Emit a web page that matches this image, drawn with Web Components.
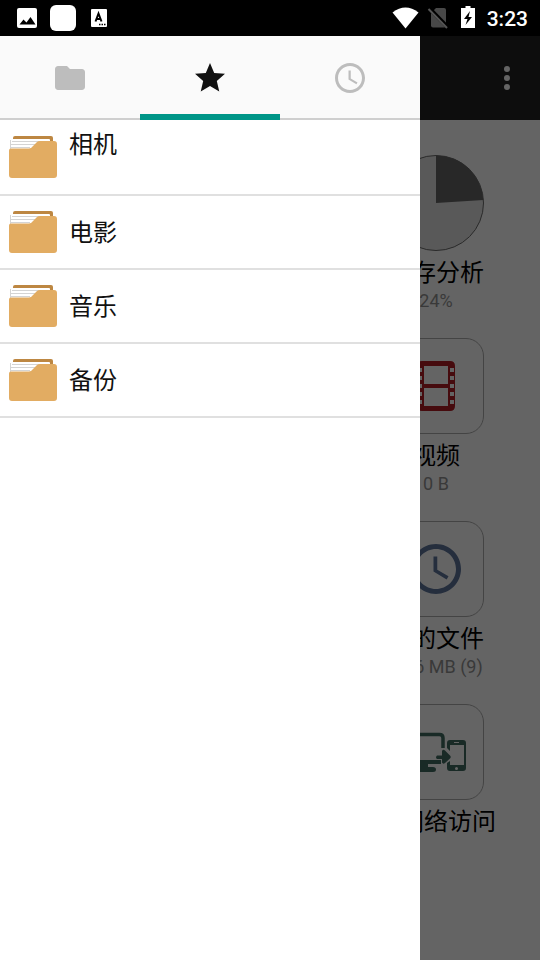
<!DOCTYPE html>
<html lang="zh-CN">
<head>
<meta charset="utf-8">
<meta name="viewport" content="width=device-width, initial-scale=1">
<title>文件管理器</title>
<style>
html, body { margin: 0; height: 100%; }
body { font-family: Roboto, "Noto Sans CJK SC", sans-serif; background: #fafafa; }
</style>
</head>
<body>
<file-app></file-app>
<script>
const define = (name, html, setup) => {
  const template = document.createElement('template');
  template.innerHTML = html;
  customElements.define(name, class extends HTMLElement {
    constructor() {
      super();
      this.attachShadow({ mode: 'open' }).append(template.content.cloneNode(true));
    }
    connectedCallback() { if (setup) setup(this, this.shadowRoot); }
  });
};

define('status-bar', `
<style>
:host { display: flex; align-items: center; justify-content: space-between; height: 36px; padding: 0 12px 0 16px; background: #000; color: #fff; }
div { display: flex; align-items: center; }
.left { gap: 12px; }
.right { gap: 8px; }
svg { display: block; }
time { font-size: 21px; line-height: 36px; font-weight: 500; padding-top: 1px; }
</style>
<div class="left">
  <svg width="22" height="22" viewBox="0 0 22 22"><rect x="1" y="1" width="20" height="20" rx="2" fill="#fff"/><path d="M3.500 17.500 7.500 12.500l3 3 4-5.500 5 7.500z" fill="#000"/></svg>
  <svg width="26" height="26" viewBox="0 0 26 26"><rect width="26" height="26" rx="6" fill="#fff"/></svg>
  <svg width="22" height="22" viewBox="0 0 22 22"><rect x="3" y="2" width="16" height="18" rx="1" fill="#fff"/><path d="M7.500 14.500 10.500 6.500l3 8M8.500 12h4" fill="none" stroke="#000" stroke-width="2"/><path d="M11 17.500h1.500m1 0H15m1 0h1.500" stroke="#000" stroke-width="1.500"/></svg>
</div>
<div class="right">
  <svg width="27" height="22" viewBox="0 0 27 22"><path d="M.5 5.500Q13.500-4.500 26.500 5.500L13.500 21.500z" fill="#fff"/></svg>
  <svg width="22" height="22" viewBox="0 0 22 22"><path d="M9 1h8q2 0 2 2v16q0 1.500-2 1.500H6q-2 0-2-2V6z" fill="#484848"/><path d="M2.500 1.500 21 20.500" stroke="#000" stroke-width="4"/><path d="M1.500 2 20 21" stroke="#555" stroke-width="2"/></svg>
  <svg width="22" height="24" viewBox="0 0 22 24"><path d="M8.500 0h5v2H18v20H4V2h4.500z" fill="#fff"/><path d="M13 5 7 13h3.500l-2 6L15 11h-3.500z" fill="#000"/></svg>
  <time>3:23</time>
</div>`);

define('app-bar', `
<style>
:host { display: flex; align-items: center; justify-content: flex-end; height: 84px; padding-right: 9px; background: #222; }
button { display: grid; place-items: center; width: 48px; height: 48px; padding: 0; border: 0; background: none; color: #fafafa; }
</style>
<button aria-label="更多选项"><svg width="36" height="36" viewBox="0 0 24 24" fill="currentColor"><circle cx="12" cy="6" r="2"/><circle cx="12" cy="12" r="2"/><circle cx="12" cy="18" r="2"/></svg></button>`);

define('storage-tile', `
<style>
:host { display: flex; flex-direction: column; align-items: center; width: 166px; text-align: center; }
.box { box-sizing: border-box; width: 96px; height: 96px; border: 1px solid #aaa; border-radius: 18px; display: grid; place-items: center; margin-bottom: 6px; }
:host([plain]) .box { border: 0; }
.title { font-size: 24px; line-height: 32px; color: #000; white-space: nowrap; }
.detail { font-size: 18px; line-height: 24px; color: #909090; white-space: nowrap; min-height: 24px; }
</style>
<div class="box"><slot name="icon"></slot></div>
<div class="title"><slot></slot></div>
<div class="detail"><slot name="detail"></slot></div>`);

define('storage-grid', `
<style>
:host { display: flex; flex-direction: column; align-items: flex-end; gap: 25px; padding: 35px 21px; }
svg { display: block; }
</style>
<storage-tile plain>
  <svg slot="icon" width="96" height="96" viewBox="0 0 96 96"><circle cx="48" cy="48" r="47.500" fill="#dfdfdf" stroke="#686868"/><path d="M48 48V.5A47.500 47.500 0 0 1 95.400 45z" fill="#646464"/></svg>
  内存分析<span slot="detail">24%</span>
</storage-tile>
<storage-tile>
  <svg slot="icon" width="38" height="50" viewBox="0 0 38 50"><path fill="#b01c24" fill-rule="evenodd" d="M5 0h28q5 0 5 5v40q0 5-5 5H5q-5 0-5-5V5q0-5 5-5zM7 5v18h24V5zm0 22v18h24V27zM1 7v4h4V7zm0 8v4h4v-4zm0 8v4h4v-4zm0 8v4h4v-4zm0 8v4h4v-4zM33 7v4h4V7zm0 8v4h4v-4zm0 8v4h4v-4zm0 8v4h4v-4zm0 8v4h4v-4z"/></svg>
  视频<span slot="detail">0 B</span>
</storage-tile>
<storage-tile>
  <svg slot="icon" width="60" height="60" viewBox="0 0 24 24" fill="#5c7399"><path d="M11.990 2C6.470 2 2 6.480 2 12s4.470 10 9.990 10C17.520 22 22 17.520 22 12S17.520 2 11.990 2zM12 20c-4.420 0-8-3.580-8-8s3.580-8 8-8 8 3.580 8 8-3.580 8-8 8zM12.500 7H11v6l5.250 3.150.75-1.230-4.500-2.670z"/></svg>
  新的文件<span slot="detail">1.36 MB (9)</span>
</storage-tile>
<storage-tile>
  <svg slot="icon" width="94" height="94" viewBox="1 1 94 94" fill="#406960"><path d="M55 44V34q0-3.500-3.500-3.500H17q-3 0-3 3v23q0 3 3 3" fill="none" stroke="#406960" stroke-width="3.500"/><path d="M16 56h37v4H16zM30 60h10v3h5q3 0 3 2.500t-3 2.500H25q-3 0-3-2.500t3-2.500h5z"/><path d="M49 51.500h5V47q1-2 3-.5l5 5q1.500 1.500 0 3l-5 4.500q-2 1.500-3-.5V55h-5q-2-1.500 0-3.500z"/><path fill-rule="evenodd" d="M62 36h13q3 0 3 3v25q0 3-3 3H62q-3 0-3-3v-5l3-2v4h14V41H62v6l-3-3v-5q0-3 3-3zm4 2v1h5v-1zM68.500 63a1.500 1.500 0 1 0 0 3 1.500 1.500 0 0 0 0-3z"/></svg>
  从网络访问
</storage-tile>`);

define('tab-strip', `
<style>
:host { display: grid; grid-template-columns: repeat(3, 1fr); height: 84px; background: linear-gradient(#cfcfcf, #cfcfcf) bottom / 100% 2px no-repeat #fafafa; }
button { display: grid; place-items: center; padding: 0; border: 0; background: none; color: #bdbdbd; }
button[aria-selected=true] { color: #111; box-shadow: inset 0 -6px #009688; }
svg { display: block; width: 36px; height: 36px; fill: currentColor; }
</style>
<button role="tab" aria-selected="false" aria-label="文件夹"><svg viewBox="0 0 24 24"><path d="M10 4H4c-1.100 0-1.990.9-1.990 2L2 18c0 1.100.9 2 2 2h16c1.100 0 2-.9 2-2V8c0-1.100-.9-2-2-2h-8z"/></svg></button>
<button role="tab" aria-selected="true" aria-label="收藏"><svg viewBox="0 0 24 24"><path d="M12 17.270 18.180 21l-1.640-7.030L22 9.240l-7.190-.61L12 2 9.190 8.630 2 9.240l5.460 4.730L5.820 21z"/></svg></button>
<button role="tab" aria-selected="false" aria-label="最近"><svg viewBox="0 0 24 24"><path d="M11.990 2C6.470 2 2 6.480 2 12s4.470 10 9.990 10C17.520 22 22 17.520 22 12S17.520 2 11.990 2zM12 20c-4.420 0-8-3.580-8-8s3.580-8 8-8 8 3.580 8 8-3.580 8-8 8zM12.500 7H11v6l5.250 3.150.75-1.230-4.500-2.670z"/></svg></button>`, (host, root) => {
  const tabs = [...root.querySelectorAll('button')];
  host.setAttribute('role', 'tablist');
  tabs.forEach(tab => tab.addEventListener('click', () =>
    tabs.forEach(t => t.setAttribute('aria-selected', String(t === tab)))));
});

define('folder-row', `
<style>
:host { display: block; border-bottom: 2px solid #e0e0e0; }
button { display: flex; align-items: center; gap: 12px; width: 100%; min-height: 72px; padding: 0 9px; border: 0; background: none; font: inherit; font-size: 24px; line-height: 32px; color: #111; text-align: left; }
.name { padding-top: 2px; }
:host([first]) button { min-height: 74px; }
:host([first]) .name { align-self: flex-start; padding-top: 9px; }
svg { display: block; flex: none; }
</style>
<button>
  <svg width="48" height="42" viewBox="0 0 48 42"><path d="M6 0h36q2 0 2 2v6H4V2q0-2 2-2z" fill="#bd8742"/><path d="M3 3h37q1 0 1 1v12H1V5q0-2 2-2z" fill="#fff"/><path d="M3 5.500h33M2 8.500h24M2 11.500h19M1.500 4v9" stroke="#d4d4d4" fill="none"/><path d="M2 12.500H20L22 12 28 6Q29 5 31 5H45Q48 5 48 8V39Q48 42 45 42H3Q0 42 0 39V14.500Q0 12.500 2 12.500Z" fill="#e2ac62"/></svg>
  <span class="name"><slot></slot></span>
</button>`);

define('side-drawer', `
<style>
:host { display: block; background: #fff; }
</style>
<tab-strip></tab-strip>
<nav aria-label="收藏"><slot></slot></nav>`);

define('file-app', `
<style>
:host { display: flex; flex-direction: column; min-height: 100vh; }
main { flex: 1; position: relative; background: #fafafa; }
.scrim { position: absolute; inset: 0; background: rgba(0, 0, 0, .6); }
side-drawer { position: absolute; inset: 0 120px 0 0; }
</style>
<status-bar></status-bar>
<main>
  <app-bar></app-bar>
  <storage-grid></storage-grid>
  <div class="scrim"></div>
  <side-drawer>
    <folder-row first>相机</folder-row>
    <folder-row>电影</folder-row>
    <folder-row>音乐</folder-row>
    <folder-row>备份</folder-row>
  </side-drawer>
</main>`);
</script>
</body>
</html>
